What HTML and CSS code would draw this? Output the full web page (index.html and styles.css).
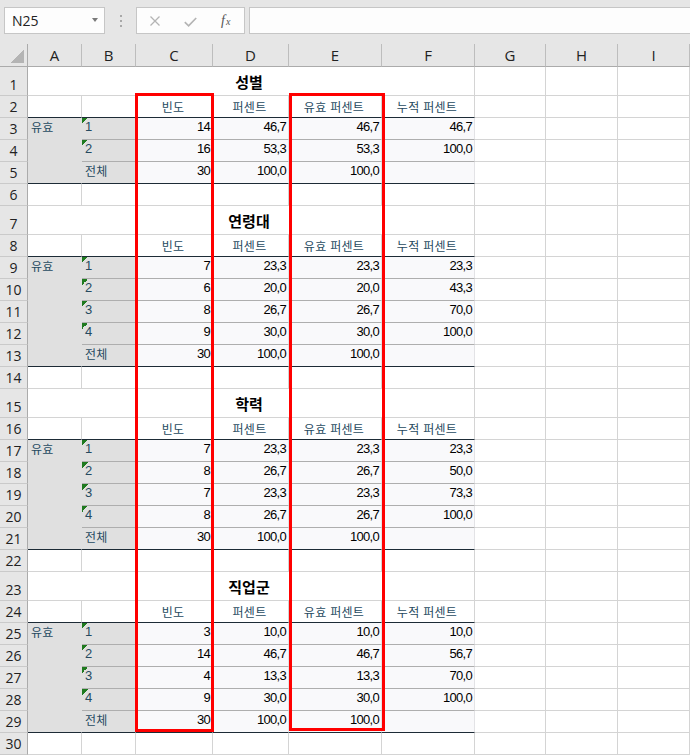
FILE: index.html
```html
<!DOCTYPE html>
<html lang="ko">
<head>
<meta charset="utf-8">
<title>Sheet</title>
<link rel="stylesheet" href="styles.css">
</head>
<body>
<div class="toolbar">
  <div class="namebox"><span>N25</span><span class="caret"></span></div>
  <div class="grip"><i></i><i></i><i></i></div>
  <div class="fxbox">
    <svg class="ic-x" width="10" height="10" viewBox="0 0 10 10"><path d="M0.5 0.5 L9.5 9.5 M9.5 0.5 L0.5 9.5" stroke="#b4b4b4" stroke-width="1.3" fill="none"/></svg>
    <svg class="ic-ok" width="13" height="10" viewBox="0 0 13 10"><path d="M0.8 5.2 L4.6 8.8 L12.2 1" stroke="#b4b4b4" stroke-width="1.7" fill="none"/></svg>
    <span class="fx"><i>f</i><i class="sx">x</i></span>
  </div>
  <div class="formula"></div>
</div>

<div class="sheet">
  <div class="row colhead"><div class="corner"></div><div>A</div><div>B</div><div>C</div><div>D</div><div>E</div><div>F</div><div>G</div><div>H</div><div>I</div></div>

  <!-- 성별 -->
  <div class="row tall"><div class="rh">1</div><div class="title">성별</div><div></div><div></div><div></div></div>
  <div class="row"><div class="rh">2</div><div class="hd"></div><div class="hd"></div><div class="hd">빈도</div><div class="hd">퍼센트</div><div class="hd">유효 퍼센트</div><div class="hd">누적 퍼센트</div><div></div><div></div><div></div></div>
  <div class="row"><div class="rh">3</div><div class="la">유효</div><div class="lb err">1</div><div class="n">14</div><div class="n">46,7</div><div class="n">46,7</div><div class="n">46,7</div><div></div><div></div><div></div></div>
  <div class="row"><div class="rh">4</div><div class="la"></div><div class="lb err">2</div><div class="n">16</div><div class="n">53,3</div><div class="n">53,3</div><div class="n">100,0</div><div></div><div></div><div></div></div>
  <div class="row end"><div class="rh">5</div><div class="la"></div><div class="lb tot">전체</div><div class="n">30</div><div class="n">100,0</div><div class="n">100,0</div><div class="n"></div><div></div><div></div><div></div></div>
  <div class="row"><div class="rh">6</div><div></div><div></div><div></div><div></div><div></div><div></div><div></div><div></div><div></div></div>

  <!-- 연령대 -->
  <div class="row tall"><div class="rh">7</div><div class="title">연령대</div><div></div><div></div><div></div></div>
  <div class="row"><div class="rh">8</div><div class="hd"></div><div class="hd"></div><div class="hd">빈도</div><div class="hd">퍼센트</div><div class="hd">유효 퍼센트</div><div class="hd">누적 퍼센트</div><div></div><div></div><div></div></div>
  <div class="row"><div class="rh">9</div><div class="la">유효</div><div class="lb err">1</div><div class="n">7</div><div class="n">23,3</div><div class="n">23,3</div><div class="n">23,3</div><div></div><div></div><div></div></div>
  <div class="row"><div class="rh">10</div><div class="la"></div><div class="lb err">2</div><div class="n">6</div><div class="n">20,0</div><div class="n">20,0</div><div class="n">43,3</div><div></div><div></div><div></div></div>
  <div class="row"><div class="rh">11</div><div class="la"></div><div class="lb err">3</div><div class="n">8</div><div class="n">26,7</div><div class="n">26,7</div><div class="n">70,0</div><div></div><div></div><div></div></div>
  <div class="row"><div class="rh">12</div><div class="la"></div><div class="lb err">4</div><div class="n">9</div><div class="n">30,0</div><div class="n">30,0</div><div class="n">100,0</div><div></div><div></div><div></div></div>
  <div class="row end"><div class="rh">13</div><div class="la"></div><div class="lb tot">전체</div><div class="n">30</div><div class="n">100,0</div><div class="n">100,0</div><div class="n"></div><div></div><div></div><div></div></div>
  <div class="row"><div class="rh">14</div><div></div><div></div><div></div><div></div><div></div><div></div><div></div><div></div><div></div></div>

  <!-- 학력 -->
  <div class="row tall"><div class="rh">15</div><div class="title">학력</div><div></div><div></div><div></div></div>
  <div class="row"><div class="rh">16</div><div class="hd"></div><div class="hd"></div><div class="hd">빈도</div><div class="hd">퍼센트</div><div class="hd">유효 퍼센트</div><div class="hd">누적 퍼센트</div><div></div><div></div><div></div></div>
  <div class="row"><div class="rh">17</div><div class="la">유효</div><div class="lb err">1</div><div class="n">7</div><div class="n">23,3</div><div class="n">23,3</div><div class="n">23,3</div><div></div><div></div><div></div></div>
  <div class="row"><div class="rh">18</div><div class="la"></div><div class="lb err">2</div><div class="n">8</div><div class="n">26,7</div><div class="n">26,7</div><div class="n">50,0</div><div></div><div></div><div></div></div>
  <div class="row"><div class="rh">19</div><div class="la"></div><div class="lb err">3</div><div class="n">7</div><div class="n">23,3</div><div class="n">23,3</div><div class="n">73,3</div><div></div><div></div><div></div></div>
  <div class="row"><div class="rh">20</div><div class="la"></div><div class="lb err">4</div><div class="n">8</div><div class="n">26,7</div><div class="n">26,7</div><div class="n">100,0</div><div></div><div></div><div></div></div>
  <div class="row end"><div class="rh">21</div><div class="la"></div><div class="lb tot">전체</div><div class="n">30</div><div class="n">100,0</div><div class="n">100,0</div><div class="n"></div><div></div><div></div><div></div></div>
  <div class="row"><div class="rh">22</div><div></div><div></div><div></div><div></div><div></div><div></div><div></div><div></div><div></div></div>

  <!-- 직업군 -->
  <div class="row tall"><div class="rh">23</div><div class="title">직업군</div><div></div><div></div><div></div></div>
  <div class="row"><div class="rh">24</div><div class="hd"></div><div class="hd"></div><div class="hd">빈도</div><div class="hd">퍼센트</div><div class="hd">유효 퍼센트</div><div class="hd">누적 퍼센트</div><div></div><div></div><div></div></div>
  <div class="row"><div class="rh">25</div><div class="la">유효</div><div class="lb err">1</div><div class="n">3</div><div class="n">10,0</div><div class="n">10,0</div><div class="n">10,0</div><div></div><div></div><div></div></div>
  <div class="row"><div class="rh">26</div><div class="la"></div><div class="lb err">2</div><div class="n">14</div><div class="n">46,7</div><div class="n">46,7</div><div class="n">56,7</div><div></div><div></div><div></div></div>
  <div class="row"><div class="rh">27</div><div class="la"></div><div class="lb err">3</div><div class="n">4</div><div class="n">13,3</div><div class="n">13,3</div><div class="n">70,0</div><div></div><div></div><div></div></div>
  <div class="row"><div class="rh">28</div><div class="la"></div><div class="lb err">4</div><div class="n">9</div><div class="n">30,0</div><div class="n">30,0</div><div class="n">100,0</div><div></div><div></div><div></div></div>
  <div class="row end"><div class="rh">29</div><div class="la"></div><div class="lb tot">전체</div><div class="n">30</div><div class="n">100,0</div><div class="n">100,0</div><div class="n"></div><div></div><div></div><div></div></div>
  <div class="row"><div class="rh">30</div><div></div><div></div><div></div><div></div><div></div><div></div><div></div><div></div><div></div></div>

  <div class="mark m1"></div>
  <div class="mark m2"></div>
</div>
</body>
</html>
```

FILE: styles.css
```css
* { box-sizing: border-box; }
html, body { margin: 0; padding: 0; }
body {
  width: 690px;
  height: 755px;
  overflow: hidden;
  background: #ffffff;
  font-family: "Open Sans", "Liberation Sans", sans-serif;
}

/* ---------- formula bar ---------- */
.toolbar {
  height: 44px;
  background: #e6e6e6;
  display: flex;
  align-items: flex-start;
  padding: 7px 0 0 4px;
}
.namebox {
  width: 101px;
  height: 27px;
  background: #fdfdfd;
  border: 1px solid #c6c6c6;
  display: flex;
  align-items: center;
  justify-content: space-between;
  padding: 0 6px 0 7px;
  font-size: 14px;
  color: #222;
}
.caret {
  width: 0;
  height: 0;
  border-left: 3.5px solid transparent;
  border-right: 3.5px solid transparent;
  border-top: 4px solid #7a7a7a;
  margin-top: -1px;
}
.grip {
  width: 31px;
  height: 27px;
  display: flex;
  flex-direction: column;
  align-items: center;
  justify-content: center;
  gap: 3px;
}
.grip i { width: 2px; height: 2px; background: #a8a8a8; }
.fxbox {
  width: 109px;
  height: 27px;
  background: #fdfdfd;
  border: 1px solid #c6c6c6;
  display: flex;
  align-items: center;
  padding-left: 13px;
}
.ic-x { margin-top: 1px; }
.ic-ok { margin-left: 24px; margin-top: 2px; }
.fx {
  margin-left: 24px;
  font-family: "Liberation Serif", serif;
  font-size: 14px;
  color: #555;
  line-height: 1;
}
.fx .sx { font-size: 10px; margin-left: 1px; }
.formula {
  flex: 1;
  height: 27px;
  margin-left: 4px;
  margin-right: -2px;
  background: #fdfdfd;
  border: 1px solid #c6c6c6;
}

/* ---------- sheet ---------- */
.sheet { position: relative; }
.row {
  display: grid;
  grid-template-columns: 28px 54px 54px 77px 76px 93px 93px 71px 72px 72px;
  height: 22px;
}
.row.tall { height: 29px; }
.row > div {
  border-right: 1px solid #d4d4d4;
  border-bottom: 1px solid #d4d4d4;
  min-width: 0;
  overflow: hidden;
  white-space: nowrap;
}
.row > .rh {
  background: #e6e6e6;
  border-right-color: #ababab;
  border-bottom-color: #cacaca;
  display: flex;
  align-items: flex-end;
  justify-content: center;
  font-size: 14px;
  line-height: 16px;
  padding-bottom: 2px;
  color: #222;
}
.colhead { height: 23px; }
.colhead > div {
  background: #e6e6e6;
  border-right-color: #bdbdbd;
  border-bottom-color: #ababab;
  display: flex;
  align-items: center;
  justify-content: center;
  font-size: 15px;
  color: #222;
}
.colhead > .corner {
  border-right-color: #ababab;
  background: linear-gradient(to top left, #b4b4b4 50%, transparent 50%) right 3px bottom 3px / 14px 14px no-repeat, #e6e6e6;
}

.row > .title {
  grid-column: span 6;
  display: flex;
  align-items: center;
  justify-content: center;
  padding-right: 4px;
  font: bold 15px "Noto Sans CJK KR", sans-serif;
  color: #000;
}
.row > .hd {
  border-bottom-color: #1d2b36;
  text-align: center;
  font: 12px/20px "Noto Sans CJK KR", sans-serif;
  letter-spacing: 0.3px;
  color: #264a60;
  padding: 1px 2px 0 0;
}
.row > .la {
  background: #e0e0e0;
  border-right-color: #e0e0e0;
  border-bottom-color: #e0e0e0;
  font: 12px/14px "Noto Sans CJK KR", sans-serif;
  letter-spacing: 0.3px;
  color: #264a60;
  padding: 2px 0 0 3px;
}
.row > .lb {
  background: #e0e0e0;
  border-right-color: #e0e0e0;
  border-bottom-color: #aeaeae;
  font: 13px/16px "Liberation Sans", sans-serif;
  color: #264a60;
  padding: 1px 0 0 3px;
}
.row > .lb.err {
  background: linear-gradient(135deg, #1f7a1f 50%, transparent 50%) 0 0 / 6px 6px no-repeat, #e0e0e0;
}
.row > .lb.tot {
  font: 12px/14px "Noto Sans CJK KR", sans-serif;
  letter-spacing: 0.3px;
  padding-top: 2px;
}
.row > .n {
  background: #f9f9fb;
  border-right-color: #e3e3e6;
  border-bottom-color: #aeaeae;
  text-align: right;
  padding: 1px 2px 0 0;
  font: 13px/16px "Liberation Sans", sans-serif;
  letter-spacing: -0.7px;
  color: #000;
}
.row.end > .la,
.row.end > .lb,
.row.end > .n { border-bottom-color: #1d2b36; }

/* red highlight rectangles laid over the sheet */
.mark {
  position: absolute;
  top: 49px;
  border: 3px solid #ff0000;
}
.m1 { left: 135px; width: 79px; height: 639px; }
.m2 { left: 289px; width: 96px; height: 638px; }
```
